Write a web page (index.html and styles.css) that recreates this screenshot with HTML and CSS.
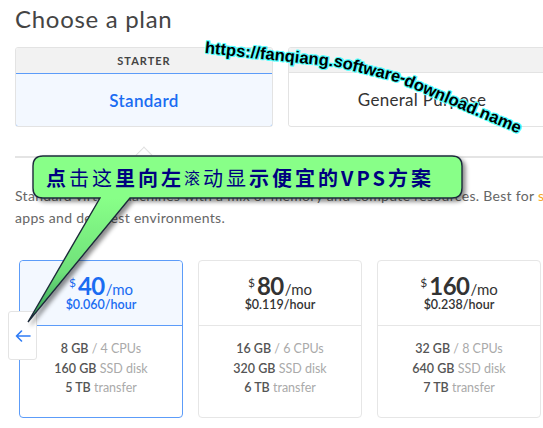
FILE: index.html
```html
<!DOCTYPE html>
<html>
<head>
<meta charset="utf-8">
<link rel="stylesheet" href="styles.css">
</head>
<body>
<div class="page">
  <h1 class="title">Choose a plan</h1>
  <div class="tabs">
    <div class="tab tab-active">
      <div class="tab-head">STARTER</div>
      <div class="tab-body">Standard</div>
    </div>
    <div class="tab">
      <div class="tab-head"></div>
      <div class="tab-body">General Purpose</div>
    </div>
  </div>
  <div class="divider"><span class="notch"></span></div>
  <div class="desc">
    <div class="desc-line">Standard virtual machines with a mix of memory and compute resources. Best for <span class="link">small projects,</span></div>
    <div class="desc-line">apps and dev/test environments.</div>
  </div>
  <div class="cards">
    <div class="card card-active">
      <div class="card-top">
        <div class="price"><span class="cur">$</span><span class="amt">40</span><span class="per">/mo</span></div>
        <div class="hour">$0.060/hour</div>
      </div>
      <div class="specs">
        <div><b>8 GB</b> / 4 CPUs</div>
        <div><b>160 GB</b> SSD disk</div>
        <div><b>5 TB</b> transfer</div>
      </div>
    </div>
    <div class="card">
      <div class="card-top">
        <div class="price"><span class="cur">$</span><span class="amt">80</span><span class="per">/mo</span></div>
        <div class="hour">$0.119/hour</div>
      </div>
      <div class="specs">
        <div><b>16 GB</b> / 6 CPUs</div>
        <div><b>320 GB</b> SSD disk</div>
        <div><b>6 TB</b> transfer</div>
      </div>
    </div>
    <div class="card">
      <div class="card-top">
        <div class="price"><span class="cur">$</span><span class="amt">160</span><span class="per">/mo</span></div>
        <div class="hour">$0.238/hour</div>
      </div>
      <div class="specs">
        <div><b>32 GB</b> / 8 CPUs</div>
        <div><b>640 GB</b> SSD disk</div>
        <div><b>7 TB</b> transfer</div>
      </div>
    </div>
  </div>

  <div class="scroll-left">
    <svg width="16" height="12" viewBox="0 0 16 12"><path d="M15 6H1.5M6.5 1L1.5 6l5 5" fill="none" stroke="#2f7cf6" stroke-width="1.6" stroke-linecap="round" stroke-linejoin="round"/></svg>
  </div>

  <svg class="callout-shape" width="543" height="428" viewBox="0 0 543 428">
    <defs>
      <linearGradient id="g" x1="0" y1="198" x2="0" y2="322" gradientUnits="userSpaceOnUse">
        <stop offset="0" stop-color="#88ff88"/>
        <stop offset="0.6" stop-color="#6fe07a"/>
        <stop offset="1" stop-color="#2f9a55"/>
      </linearGradient>
      <filter id="sh" x="-10%" y="-10%" width="130%" height="130%">
        <feDropShadow dx="3" dy="3" stdDeviation="2" flood-color="#000" flood-opacity="0.45"/>
      </filter>
    </defs>
    <path d="M43 156H452Q462 156 462 166V188Q462 198 452 198H130L28 322L100 198H43Q33 198 33 188V166Q33 156 43 156Z" fill="url(#g)" stroke="#1d2b3a" stroke-width="1.4" filter="url(#sh)"/>
  </svg>
  <div class="callout-text"><span class="b">点</span>击这<span class="b">里向左</span><span class="s">滚</span>动显<span class="b">示便宜的VPS方案</span></div>

  <span class="wm wm1">https://fanqiang.</span>
  <span class="wm wm2">software-</span>
  <span class="wm wm3">download.name</span>
</div>
</body>
</html>
```

FILE: styles.css
```css
* { box-sizing: border-box; }
body {
  margin: 0;
  font-family: Lato, "Open Sans", sans-serif;
  background: #fff;
}
.page {
  position: relative;
  width: 543px;
  height: 428px;
  overflow: hidden;
}
.title {
  margin: 0;
  padding: 5px 0 0 15px;
  font-size: 24px;
  line-height: 28px;
  font-weight: 400;
  letter-spacing: 0.7px;
  color: #444;
}
.tabs {
  display: flex;
  gap: 15px;
  margin-top: 14px;
  padding-left: 15px;
}
.tab {
  flex: 0 0 258px;
  display: flex;
  flex-direction: column;
  border: 1px solid #e3e3e3;
  border-radius: 3px;
  overflow: hidden;
}
.tab + .tab { flex-basis: 268px; }
.tab-head {
  height: 25px;
  background: #f2f2f2;
  border-bottom: 1px solid #e3e3e3;
  font-size: 11px;
  font-weight: 700;
  letter-spacing: 1px;
  color: #444;
  display: flex;
  align-items: center;
  justify-content: center;
}
.tab-body {
  height: 52px;
  display: flex;
  align-items: center;
  justify-content: center;
  font-size: 17px;
  letter-spacing: 0.3px;
  color: #333;
  background: #fff;
}
.tab-active .tab-head { border-bottom: none; }
.tab-active .tab-body {
  background: #f3f8ff;
  border: 1px solid #5c9cf9;
  border-radius: 0 0 3px 3px;
  margin: 0 -1px -1px;
  height: 54px;
  color: #1a6cf2;
  font-weight: 600;
}
.divider {
  position: relative;
  margin: 29px 0 0 15px;
  height: 2px;
  background: #e4e4e4;
}
.notch {
  position: absolute;
  left: 123px;
  top: -7px;
  width: 12px;
  height: 12px;
  background: #fff;
  border-left: 1px solid #e0e0e0;
  border-top: 1px solid #e0e0e0;
  transform: rotate(45deg);
}
.desc {
  margin-top: 27px;
  padding-left: 15px;
  font-size: 14px;
  line-height: 22px;
  letter-spacing: 0.3px;
  color: #666;
}
.desc-line { white-space: nowrap; }
.link { color: #f5a623; }
.cards {
  display: flex;
  gap: 15px;
  margin-top: 31px;
  padding-left: 19px;
}
.card {
  flex: 0 0 164px;
  height: 158px;
  border: 1px solid #e6e6e6;
  border-radius: 4px;
  text-align: center;
  color: #333;
}
.card-top {
  height: 65px;
  border-bottom: 1px solid #e6e6e6;
  padding-top: 14px;
}
.card-active { border-color: #5c9cf9; color: #1a6cf2; }
.card-active .card-top { background: #f3f8ff; border-bottom-color: #5c9cf9; border-radius: 4px 4px 0 0; }
.price {
  line-height: 22px;
  height: 22px;
}
.cur { font-size: 12px; line-height: 16px; vertical-align: top; margin-right: 2px; }
.amt { font-size: 24px; font-weight: 700; letter-spacing: -0.5px; }
.per { font-size: 15px; margin-left: 1px; }
.hour { font-size: 12.5px; font-weight: 600; line-height: 14px; margin-top: 1px; }
.specs {
  padding-top: 13px;
  font-size: 12.5px;
  line-height: 19.5px;
  color: #aaa;
}
.specs b { color: #555; font-weight: 600; }

.scroll-left {
  position: absolute;
  left: 8px;
  top: 311px;
  width: 29px;
  height: 49px;
  background: #fff;
  border: 1px solid #e4e4e4;
  border-radius: 3px;
  display: flex;
  align-items: center;
  justify-content: center;
}
.callout-shape {
  position: absolute;
  left: 0;
  top: 0;
}
.callout-text {
  position: absolute;
  left: 33px;
  top: 156px;
  width: 429px;
  height: 42px;
  padding-left: 13px;
  display: flex;
  align-items: center;
  font-family: "Noto Sans CJK SC", sans-serif;
  font-size: 20px;
  letter-spacing: 3px;
  color: #000080;
  white-space: nowrap;
}
.callout-text .b { font-weight: 700; }
.callout-text .s { font-size: 16px; }
.wm {
  position: absolute;
  font-family: "Liberation Sans", Arial, sans-serif;
  font-weight: 700;
  font-size: 16.6px;
  line-height: 16px;
  height: 16px;
  color: #000;
  white-space: nowrap;
  transform-origin: 0 50%;
  text-shadow: 1px 0 0 #5ff, -1px 0 0 #5ff, 0 1px 0 #5ff, 0 -1px 0 #5ff, 1px 1px 0 #5ff, -1px -1px 0 #5ff, 1px -1px 0 #5ff, -1px 1px 0 #5ff;
}
.wm1 { left: 205px; top: 40px; transform: rotate(6deg); }
.wm2 { left: 334px; top: 53px; transform: rotate(14deg); }
.wm3 { left: 405px; top: 72px; transform: rotate(23deg); }
```
